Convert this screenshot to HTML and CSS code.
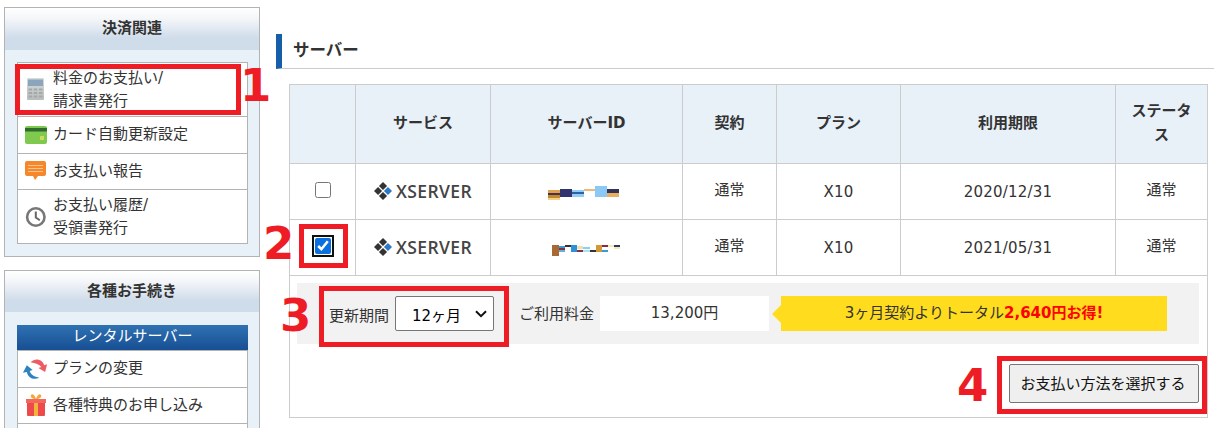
FILE: index.html
```html
<!DOCTYPE html>
<html lang="ja">
<head>
<meta charset="utf-8">
<title>サーバー</title>
<link rel="stylesheet" href="styles.css">
</head>
<body>
<div class="page">
  <aside class="sidebar">
    <section class="panel">
      <h2 class="panel-head">決済関連</h2>
      <ul class="menu">
        <li class="first"><svg class="ico" viewBox="0 0 24 24"><defs><linearGradient id="calc" x1="0" y1="0" x2="0" y2="1"><stop offset="0" stop-color="#d8dbdc"/><stop offset="1" stop-color="#b9bcbd"/></linearGradient></defs><rect x="2" y="0" width="17" height="22" rx="1" fill="url(#calc)"/><rect x="3" y="1.5" width="15" height="6.5" fill="#8ba5bd"/><g fill="#a4a8aa"><rect x="3.5" y="10.5" width="3.6" height="2"/><rect x="8.7" y="10.5" width="3.6" height="2"/><rect x="13.9" y="10.5" width="3.6" height="2"/><rect x="3.5" y="14" width="3.6" height="2"/><rect x="8.7" y="14" width="3.6" height="2"/><rect x="13.9" y="14" width="3.6" height="2"/><rect x="3.5" y="17.5" width="3.6" height="2"/><rect x="8.7" y="17.5" width="3.6" height="2"/><rect x="13.9" y="17.5" width="3.6" height="2"/></g></svg><span>料金のお支払い/<br>請求書発行</span></li>
        <li><svg class="ico" viewBox="0 0 24 24"><rect x="0" y="3" width="22" height="18" rx="2" fill="#7fc94f"/><rect x="0" y="5" width="22" height="3.5" fill="#2f6b2a"/><rect x="15" y="13" width="4" height="4" fill="#c9dc5a"/></svg><span>カード自動更新設定</span></li>
        <li><svg class="ico" viewBox="0 0 24 24"><path d="M2 2h17a2 2 0 0 1 2 2v11a2 2 0 0 1-2 2h-6l-3 4-2-4H2a2 2 0 0 1-2-2V4a2 2 0 0 1 2-2z" fill="#f5882a"/><path d="M3 6.5h15M3 9.5h15M3 12.5h15" stroke="#fbc48e" stroke-width="1.2"/></svg><span>お支払い報告</span></li>
        <li class="last"><svg class="ico" viewBox="0 0 24 24"><circle cx="10.8" cy="12" r="8.7" fill="#fff" stroke="#777" stroke-width="2.6"/><path d="M10.8 6.5v6l4 2.8" fill="none" stroke="#666" stroke-width="2"/></svg><span>お支払い履歴/<br>受領書発行</span></li>
      </ul>
    </section>
    <section class="panel">
      <h2 class="panel-head">各種お手続き</h2>
      <div class="menu-title">レンタルサーバー</div>
      <ul class="menu menu-flush">
        <li><svg class="ico wide" viewBox="0 0 28 24"><path d="M9 5c5-5 12-3 14 3l3-1-2 8-7-4 3-1c-2-3-6-4-11-5z" fill="#ef5b64"/><path d="M18 21c-6 3-12 0-13-6l-4 1 4-8 6 5-3 1c1 4 5 6 10 7z" fill="#2d82bf"/></svg><span>プランの変更</span></li>
        <li><svg class="ico" viewBox="0 0 24 24"><rect x="2" y="8" width="18" height="15" rx="1" fill="#ee4a4e"/><rect x="9" y="8" width="4" height="15" fill="#f2b53c"/><rect x="1" y="6" width="20" height="4" fill="#f4675e"/><path d="M11 6C7 6 5 4 6 2s4 0 5 4c1-4 4-6 5-4s-1 4-5 4z" fill="#f2a93c"/></svg><span>各種特典のお申し込み</span></li>
        <li class="stub"></li>
      </ul>
    </section>
  </aside>

  <main class="main">
    <h1 class="title">サーバー</h1>
    <table class="servers">
      <colgroup>
        <col class="c1"><col class="c2"><col class="c3"><col class="c4"><col class="c5"><col class="c6"><col class="c7">
      </colgroup>
      <thead>
        <tr><th></th><th>サービス</th><th>サーバーID</th><th>契約</th><th>プラン</th><th>利用期限</th><th>ステータス</th></tr>
      </thead>
      <tbody>
        <tr>
          <td><input class="check" type="checkbox"></td>
          <td><div class="logo"><svg class="diamonds" viewBox="0 0 16 16"><path d="M8 0l3.6 3.6L8 7.2 4.4 3.6zM3.6 4.4L7.2 8l-3.6 3.6L0 8zM8 8.8l3.6 3.6L8 16l-3.6-3.6z" fill="#333"/><path d="M12.4 4.4L16 8l-3.6 3.6L8.8 8z" fill="#2b78c5"/></svg><span>XSERVER</span></div></td>
          <td><svg class="mosaic mosaic-a" width="72" height="14" viewBox="0 0 72 14"><rect x="0" y="4" width="12" height="10" fill="#f7cf8c"/><rect x="0" y="4" width="12" height="3" fill="#e0a050"/><rect x="0" y="7" width="12" height="2" fill="#4a3050"/><rect x="0" y="9" width="12" height="3" fill="#c08a2c"/><rect x="12" y="3" width="12" height="8" fill="#33336f"/><rect x="24" y="4" width="12" height="7" fill="#8fcdf5"/><rect x="24" y="6" width="12" height="2" fill="#3060a0"/><rect x="36" y="3" width="11" height="2" fill="#f0b878"/><rect x="47" y="0" width="12" height="11" fill="#8cc8f5"/><rect x="59" y="3" width="12" height="8" fill="#e8b060"/><rect x="59" y="3" width="12" height="4" fill="#333355"/></svg></td>
          <td class="txt">通常</td><td class="lat">X10</td><td class="lat">2020/12/31</td><td class="txt">通常</td>
        </tr>
        <tr>
          <td><input class="check focused" type="checkbox" checked></td>
          <td><div class="logo"><svg class="diamonds" viewBox="0 0 16 16"><path d="M8 0l3.6 3.6L8 7.2 4.4 3.6zM3.6 4.4L7.2 8l-3.6 3.6L0 8zM8 8.8l3.6 3.6L8 16l-3.6-3.6z" fill="#333"/><path d="M12.4 4.4L16 8l-3.6 3.6L8.8 8z" fill="#2b78c5"/></svg><span>XSERVER</span></div></td>
          <td><svg class="mosaic mosaic-b" width="70" height="11" viewBox="0 0 70 11"><rect x="0" y="0" width="7" height="11" fill="#a86a34"/><rect x="7" y="1" width="6" height="2" fill="#3a9ad8"/><rect x="7" y="3" width="6" height="2" fill="#8a3040"/><rect x="7" y="5" width="6" height="2" fill="#60b0e0"/><rect x="13" y="0" width="6" height="2" fill="#333"/><rect x="19" y="0" width="6" height="7" fill="#3090d8"/><rect x="25" y="1" width="6" height="3" fill="#f0e0b0"/><rect x="25" y="5" width="6" height="2" fill="#883040"/><rect x="31" y="2" width="7" height="2" fill="#8ad0f0"/><rect x="31" y="5" width="7" height="2" fill="#a8e0f5"/><rect x="38" y="5" width="6" height="2" fill="#333"/><rect x="44" y="0" width="6" height="7" fill="#d09838"/><rect x="50" y="0" width="6" height="2" fill="#8a2a3a"/><rect x="50" y="5" width="6" height="2" fill="#3a9ad8"/><rect x="56" y="0" width="6" height="2" fill="#f5eab8"/><rect x="62" y="0" width="6" height="2" fill="#33336f"/><rect x="62" y="2" width="6" height="2" fill="#f5eab0"/></svg></td>
          <td class="txt">通常</td><td class="lat">X10</td><td class="lat">2021/05/31</td><td class="txt">通常</td>
        </tr>
        <tr class="foot-row">
          <td colspan="7">
            <div class="renew">
              <label class="renew-label" for="term">更新期間</label>
              <select class="term" id="term"><option>12ヶ月</option></select>
              <span class="fee-label">ご利用料金</span>
              <span class="fee">13,200円</span>
              <span class="deal">3ヶ月契約よりトータル<strong>2,640円お得!</strong></span>
            </div>
            <div class="actions"><button class="pay" type="button">お支払い方法を選択する</button></div>
          </td>
        </tr>
      </tbody>
    </table>
  </main>
</div>

<div class="mark m1"></div><span class="num n1">1</span>
<div class="mark m2"></div><span class="num n2">2</span>
<div class="mark m3"></div><span class="num n3">3</span>
<div class="mark m4"></div><span class="num n4">4</span>
</body>
</html>
```
FILE: styles.css
```css
* { box-sizing: border-box; }
html, body { margin: 0; padding: 0; }
body {
  position: relative;
  width: 1219px;
  height: 428px;
  overflow: hidden;
  background: #fff;
  color: #333;
  font-family: "DejaVu Sans", "Noto Sans CJK JP", sans-serif;
  font-size: 15px;
}
.page { display: flex; align-items: flex-start; height: 428px; overflow: hidden; padding: 7px 5px 0 4px; }

/* sidebar */
.sidebar { width: 256px; flex: none; display: flex; flex-direction: column; gap: 13px; }
.panel { border: 1px solid #b3b3b3; background: #e8f0f8; padding-bottom: 12px; }
.panel-head {
  margin: 0;
  height: 42px;
  line-height: 41px;
  text-align: center;
  font-size: 15px;
  font-weight: 700;
  background: linear-gradient(#fff 0, #f4f6f9 25%, #cfdcea 72%, #cfdcea 100%);
}
.panel + .panel .panel-head { height: 41px; }
.menu { list-style: none; margin: 12px 11px 0 12px; padding: 0; border: 1px solid #b3b3b3; background: #fff; }
.menu li {
  display: flex;
  align-items: center;
  height: 37px;
  padding: 0 0 1px 7px;
  border-top: 1px solid #b3b3b3;
  line-height: 23px;
  gap: 4px;
}
.menu li:first-child { border-top: 0; height: 36px; }
.menu li:nth-child(3) { height: 36px; }
.menu-flush li:nth-child(2) { height: 36px; }
.menu li.first { height: 53px; padding-bottom: 0; }
.menu li.last { height: 54px; padding-bottom: 0; }
.ico { width: 24px; height: 24px; flex: none; }
.ico.wide { width: 27px; margin-left: -3px; }
.menu-title {
  margin: 13px 11px 0 12px;
  height: 25px;
  line-height: 23px;
  text-align: center;
  color: #fff;
  background: linear-gradient(#2f72b3, #174f93);
}
.menu-flush { margin-top: 0; }
.menu li.stub { height: 30px; }

/* main */
.main { flex: 1; margin-left: 16px; padding-top: 27px; }
.title {
  margin: 0;
  height: 35px;
  line-height: 33px;
  padding-left: 11px;
  font-size: 16.5px;
  font-weight: 700;
  border-left: 6px solid #175ea8;
  border-bottom: 1px solid #ccc;
}
.servers {
  width: 918px;
  margin: 15px 0 0 13px;
  table-layout: fixed;
  border-collapse: collapse;
  text-align: center;
}
.c1 { width: 66px; } .c2 { width: 135px; } .c3 { width: 192px; } .c4 { width: 94px; }
.c5 { width: 124px; } .c6 { width: 215px; } .c7 { width: 92px; }
.servers th, .servers td { border: 1px solid #ccc; padding: 0; }
.servers th { height: 79px; background: #e8f0f8; font-size: 15px; font-weight: 700; padding: 0 12px 3px; line-height: 24px; }
.servers tbody td { height: 56px; }
.servers tbody td.txt { padding-bottom: 6px; }
.servers tbody td.lat { letter-spacing: .2px; }
.check { display: block; width: 16px; height: 16px; margin: -3px auto 0; accent-color: #0b6fe0; }
.check.focused { outline: 2px solid #101010; outline-offset: 1px; border-radius: 2px; }
.logo { display: flex; align-items: center; justify-content: center; gap: 4px; margin-top: -1px; }
.diamonds { width: 18px; height: 18px; flex: none; }
.logo span { font-family: "Open Sans", sans-serif; font-size: 17.5px; font-weight: 600; letter-spacing: .4px; color: #444; }
.mosaic { display: block; }
.mosaic-a { margin: 3px 0 0 57px; }
.mosaic-b { margin: 6px 0 0 61px; }

.servers .foot-row td { height: 142px; padding: 7px 8px 14px 7px; vertical-align: top; }
.renew {
  display: flex;
  align-items: center;
  height: 61px;
  padding-left: 32px;
  background: #f2f2f2;
}
.renew-label { margin-top: 2px; }
.term {
  appearance: none;
  width: 99px;
  height: 35px;
  margin-left: 6px;
  padding: 4px 0 0 16px;
  font-family: inherit;
  font-size: 15px;
  color: #000;
  background: #fff url("data:image/svg+xml,%3Csvg xmlns='http://www.w3.org/2000/svg' width='12' height='8' viewBox='0 0 12 8'%3E%3Cpath d='M1 1.2l5 5 5-5' fill='none' stroke='%23111' stroke-width='2'/%3E%3C/svg%3E") no-repeat right 6px center;
  border: 1px solid #767676;
  border-radius: 2px;
}
.fee-label { margin-left: 25px; margin-top: -3px; }
.fee { width: 169px; height: 35px; margin-left: 6px; line-height: 35px; text-align: center; background: #fff; }
.deal {
  position: relative;
  width: 386px;
  height: 35px;
  margin-left: 12px;
  line-height: 34px;
  text-align: center;
  background: #ffdc1e;
}
.deal::before {
  content: "";
  position: absolute;
  left: -9px;
  top: 9px;
  border-style: solid;
  border-width: 9px 9px 9px 0;
  border-color: transparent #ffdc1e transparent transparent;
}
.deal strong { color: #f00; }
.actions { display: flex; justify-content: flex-end; margin-top: 20px; }
.pay {
  width: 190px;
  height: 39px;
  padding: 0 2px 3px 0;
  font-family: inherit;
  font-size: 15px;
  color: #111;
  background: #efefef;
  border: 1px solid #767676;
  border-radius: 2px;
}

/* annotations laid over the screenshot */
.mark { position: absolute; border: 5px solid #ee1c25; }
.m1 { left: 15px; top: 64px; width: 226px; height: 51px; }
.m2 { left: 299px; top: 224px; width: 49px; height: 44px; }
.m3 { left: 319px; top: 286px; width: 190px; height: 61px; }
.m4 { left: 997px; top: 356px; width: 210px; height: 58px; }
.num {
  position: absolute;
  font-family: "DejaVu Sans", sans-serif;
  font-size: 45px;
  font-weight: 700;
  line-height: 46px;
  color: #ee1c25;
}
.n1 { left: 240px; top: 63px; }
.n2 { left: 263px; top: 221px; }
.n3 { left: 280px; top: 293px; }
.n4 { left: 957px; top: 363px; }
```
